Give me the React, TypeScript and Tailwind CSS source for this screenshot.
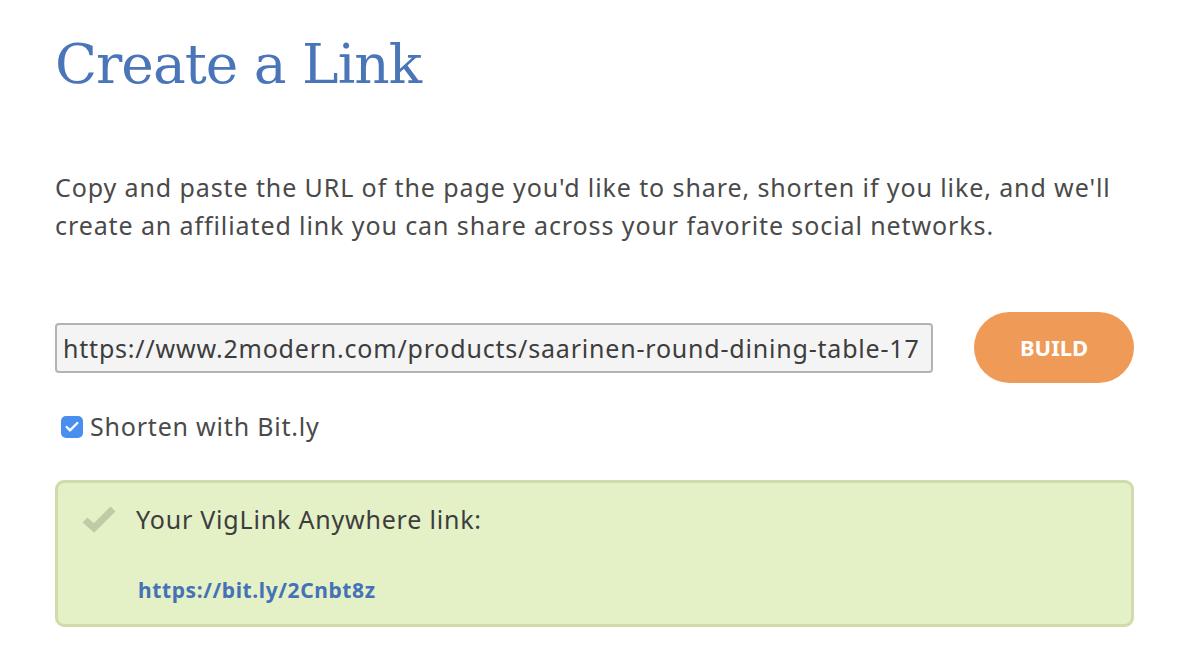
import { Check } from "lucide-react";

export default function App() {
  return (
    <div className="w-[1190px] h-[670px] bg-white overflow-hidden" style={{ fontFamily: "'Noto Sans', Lato, sans-serif" }}>
      <div className="pl-[55px] pr-[56px]">
        <h1
          className="pt-[24px] text-[55px] leading-[80px] text-[#4a75b8] tracking-[-1px]"
          style={{ fontFamily: "'DejaVu Serif', serif" }}
        >
          Create a Link
        </h1>

        <p className="mt-[64px] text-[25px] leading-[38px] text-[#4a4a4a] tracking-[0.9px] whitespace-nowrap">
          Copy and paste the URL of the page you'd like to share, shorten if you like, and we'll
          <br />
          create an affiliated link you can share across your favorite social networks.
        </p>

        <div className="mt-[68px] flex items-center gap-[41px]">
          <input
            type="text"
            readOnly
            defaultValue="https://www.2modern.com/products/saarinen-round-dining-table-17"
            className="w-[878px] h-[50px] bg-[#f4f4f4] border-2 border-[#b3b3b3] rounded-[4px] px-[6px] text-[25px] text-[#3d3d3d] outline-none tracking-[0.8px]"
          />
          <button className="w-[160px] h-[71px] rounded-full bg-[#f09a58] text-white text-[22px] font-bold">
            BUILD
          </button>
        </div>

        <label className="mt-[25px] flex items-center gap-[7px] pl-[6px]">
          <span className="w-[22px] h-[22px] rounded-[5px] bg-[#4a8ef0] flex items-center justify-center">
            <Check className="w-[16px] h-[16px] text-white" strokeWidth={3.5} />
          </span>
          <span className="text-[25px] text-[#4a4a4a] tracking-[0.8px]">Shorten with Bit.ly</span>
        </label>

        <div className="mt-[34px] h-[147px] border-[3px] border-[#cfdbab] bg-[#e4f0c5] rounded-[9px] pl-[24px] pt-[18px]">
          <div className="flex items-center gap-[20px]">
            <svg width="34" height="28" viewBox="0 0 34 28">
              <path d="M3 15 L12 23 L31 4" fill="none" stroke="#bfcaa7" strokeWidth="7" strokeLinejoin="miter" />
            </svg>
            <span className="text-[25px] text-[#3d3d3d] tracking-[0.8px]">Your VigLink Anywhere link:</span>
          </div>
          <div className="mt-[37px] pl-[56px] text-[21px] font-bold text-[#4571b8] tracking-[0.6px]">https://bit.ly/2Cnbt8z</div>
        </div>
      </div>
    </div>
  );
}
